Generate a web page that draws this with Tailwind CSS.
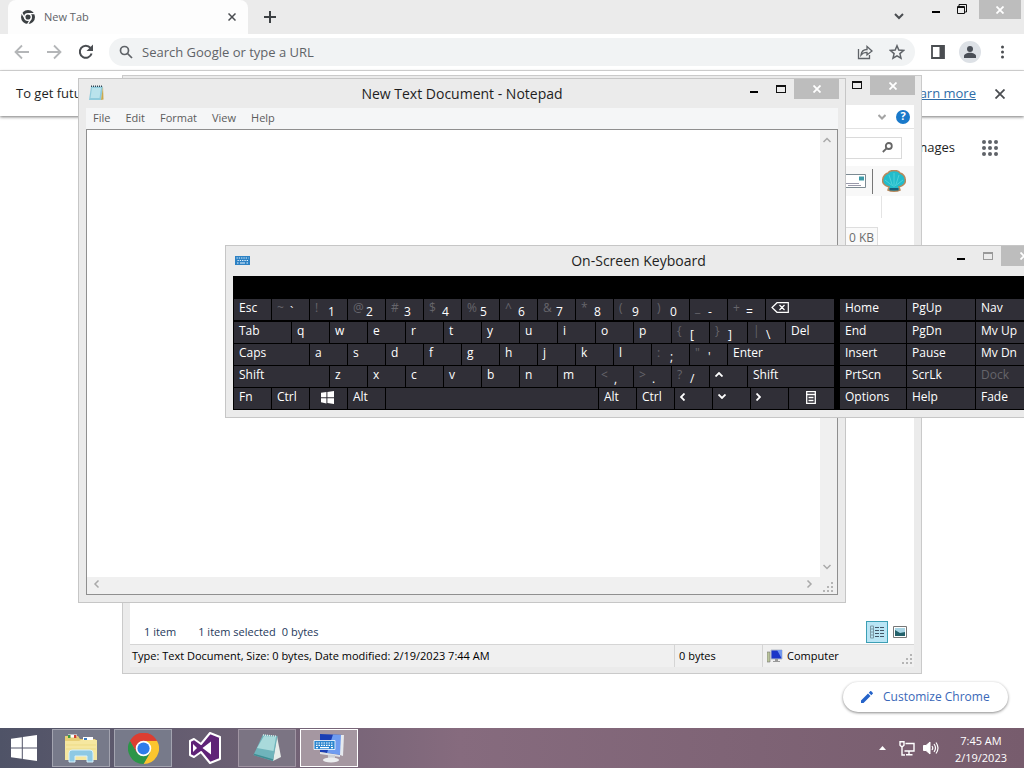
<!doctype html>
<html lang="en">
<head>
  <meta charset="utf-8">
  <meta name="viewport" content="width=device-width, initial-scale=1">
  <title>Desktop</title>
  <script src="https://cdn.jsdelivr.net/npm/@tailwindcss/browser@4"></script>
</head>

<body class="relative flex h-screen flex-col overflow-hidden bg-white font-['Open_Sans','Noto_Sans',sans-serif] text-xs text-[#1e1e1e]">

  <!-- Browser -->
  <div class="flex min-h-0 flex-1 flex-col">
    <div class="flex h-[34px] shrink-0 bg-[#ebebeb] pl-2">
      <div class="flex w-60 items-center rounded-t-lg bg-[#fdfdfd] px-3">
        <svg class="h-4 w-4" viewBox="0 0 16 16" fill="none">
          <circle cx="8" cy="8" r="7" fill="#3c4043" />
          <circle cx="8" cy="8" r="3.3" stroke="#fff" stroke-width="1.4" />
          <path d="M8 4.6H15M5.1 9.6L1.6 3.6M11 9.6L7.4 15.6" stroke="#fff" stroke-width="1.2" />
        </svg>
        <span class="ml-2 flex-1 text-[11px] text-[#5f6368]">New Tab</span>
        <button aria-label="Close tab">
          <svg class="h-2 w-2" viewBox="0 0 8 8" stroke="#4a4d51" stroke-width="1.5"><path d="M0.5 0.5l7 7M7.5 0.5l-7 7" /></svg>
        </button>
      </div>
      <button class="ml-4 self-center" aria-label="New tab">
        <svg class="h-3 w-3" viewBox="0 0 12 12" stroke="#3c4043" stroke-width="2"><path d="M6 0v12M0 6h12" /></svg>
      </button>
      <div class="ml-auto flex items-start">
        <button class="mt-3 mr-7" aria-label="Search tabs">
          <svg class="h-2 w-2.5" viewBox="0 0 10 8" fill="none" stroke="#4a4d51" stroke-width="2"><path d="M1 2l4 4 4-4" /></svg>
        </button>
        <button class="mt-[11px] mr-[17px]" aria-label="Minimize"><span class="block h-0.5 w-2 bg-black"></span></button>
        <button class="mt-1 mr-3" aria-label="Restore">
          <svg class="h-2.5 w-2.5" viewBox="0 0 10 10" fill="none" stroke="#111"><path d="M2 2V.5h7.500V8H8" /><path d="M.5 2.500h7v7h-7z" /><path d="M0 3.500h8" /></svg>
        </button>
        <button class="mr-[3px] flex h-[19px] w-[42px] items-center justify-center bg-[#bdbdbd]" aria-label="Close">
          <svg class="h-2 w-2" viewBox="0 0 8 8" stroke="#fff" stroke-width="1.8"><path d="M0.500 0.500l7 7M7.500 0.500l-7 7" /></svg>
        </button>
      </div>
    </div>

    <div class="flex h-[37px] shrink-0 items-center border-b border-[#dcdcdc] pr-[15px] pl-3.5">
      <button class="w-8" aria-label="Back">
        <svg class="h-4 w-4" viewBox="0 0 16 16" fill="none" stroke="#b4b6b8" stroke-width="1.800"><path d="M15 8H2M8 1.500L1.500 8 8 14.500" /></svg>
      </button>
      <button class="w-8" aria-label="Forward">
        <svg class="h-4 w-4" viewBox="0 0 16 16" fill="none" stroke="#b4b6b8" stroke-width="1.800"><path d="M1 8h13M8 1.500L14.500 8 8 14.500" /></svg>
      </button>
      <button aria-label="Reload">
        <svg class="h-4 w-4" viewBox="0 0 16 16" fill="none" stroke="#4a4d51" stroke-width="2"><path d="M13.600 9.500A6 6 0 1 1 12.500 4" /><path d="M15 .5v6.500H8.500z" fill="#4a4d51" stroke="none" /></svg>
      </button>
      <div class="ml-[15px] flex h-7 flex-1 items-center rounded-full bg-[#f1f3f4] px-2.5">
        <svg class="h-3.5 w-3.5" viewBox="0 0 14 14" fill="none" stroke="#5f6368" stroke-width="1.700"><circle cx="5.500" cy="5.500" r="4" /><path d="M8.500 8.500l4.500 4.500" /></svg>
        <input class="ml-[9px] min-w-0 flex-1 pt-px text-[13px] outline-none placeholder:text-[#5f6368]" type="text" aria-label="Address" placeholder="Search Google or type a URL">
        <svg class="mr-4 h-4 w-4" viewBox="0 0 16 16" fill="none" stroke="#5f6368" stroke-width="1.300"><path d="M1.500 5v9.500h11V11" /><path d="M4 11c.5-4 3-5.500 6-5.500V2.500L15 7l-5 4V8.300C7.500 8.300 5.500 9 4 11z" /></svg>
        <svg class="h-4 w-4" viewBox="0 0 16 16" fill="none" stroke="#5f6368" stroke-width="1.500"><path d="M8 1.800l1.800 4.300 4.700.4-3.600 3.100 1.100 4.600L8 11.800l-4 2.400 1.100-4.600L1.500 6.500l4.700-.4z" /></svg>
      </div>
      <svg class="ml-4 h-3.5 w-3.5" viewBox="0 0 14 14"><path d="M1 1h12v12H1z" fill="none" stroke="#4a4d51" stroke-width="1.800" /><path d="M8.500 1H13v12H8.500z" fill="#4a4d51" /></svg>
      <button class="ml-3.5" aria-label="Profile">
        <svg class="h-[22px] w-[22px]" viewBox="0 0 22 22"><circle cx="11" cy="11" r="11" fill="#dde1e6" /><circle cx="11" cy="8" r="3" fill="#4a4f57" /><path d="M5 17v-2c0-2 3-3.300 6-3.300s6 1.300 6 3.300v2z" fill="#4a4f57" /></svg>
      </button>
      <button class="ml-[15px] w-[13px]" aria-label="Menu">
        <svg class="h-3.5 w-[13px]" viewBox="0 0 13 14" fill="#4a4d51"><circle cx="6.500" cy="2" r="1.500" /><circle cx="6.500" cy="7" r="1.500" /><circle cx="6.500" cy="12" r="1.500" /></svg>
      </button>
    </div>

    <div class="relative flex h-[45px] shrink-0 items-center bg-white pr-[19px] pl-4 shadow-[0_1px_3px_#777]">
      <span class="flex-1 text-[13px]">To get future updates, you'll need Windows 10</span>
      <a class="text-[13px] text-[#2f6da8] underline" href="#">Learn more</a>
      <button class="ml-[19px]" aria-label="Dismiss">
        <svg class="h-2.5 w-2.5" viewBox="0 0 10 10" stroke="#4a4d51" stroke-width="1.800"><path d="M0.500 0.500l9 9M9.500 0.500l-9 9" /></svg>
      </button>
    </div>

    <div class="flex flex-1 flex-col items-end justify-between bg-white pb-4">
      <div class="flex items-center pt-[23px] pr-[26px]">
        <a class="text-[13px]" href="#">Images</a>
        <button class="ml-[27px]" aria-label="Google apps">
          <svg class="h-4 w-4" viewBox="0 0 16 16" fill="#5f6368"><circle cx="2" cy="2" r="2" /><circle cx="8" cy="2" r="2" /><circle cx="14" cy="2" r="2" /><circle cx="2" cy="8" r="2" /><circle cx="8" cy="8" r="2" /><circle cx="14" cy="8" r="2" /><circle cx="2" cy="14" r="2" /><circle cx="8" cy="14" r="2" /><circle cx="14" cy="14" r="2" /></svg>
        </button>
      </div>
      <button class="mr-4 flex h-[30px] w-[165px] items-center rounded-full bg-white pl-[18px] text-xs text-[#3a68b8] shadow-[0_1px_3px_#888]">
        <svg class="mr-2.5 h-3 w-3" viewBox="0 0 12 12" fill="#2563c9"><path d="M0 9.500V12h2.500l7-7L7 2.500zM7.800 1.700l2.500 2.500L11.700 2.800c.4-.4.4-.8 0-1.100L10.300.3c-.3-.4-.7-.4-1.100 0z" /></svg>
        Customize Chrome
      </button>
    </div>
  </div>

  <!-- Explorer window -->
  <section class="absolute top-[75px] left-[122px] flex h-[599px] w-[800px] flex-col border border-[#cacaca] bg-[#ebebeb] px-[7px] pb-1.5" aria-label="Explorer">
    <div class="flex h-[29px] shrink-0 items-start justify-end">
      <button class="mt-[5px] mr-2" aria-label="Maximize"><span class="block h-2 w-2.5 border border-t-2 border-[#111]"></span></button>
      <button class="-mr-[1px] flex h-[19px] w-[45px] items-center justify-center bg-[#bdbdbd]" aria-label="Close">
        <svg class="h-2 w-2" viewBox="0 0 8 8" stroke="#fff" stroke-width="1.800"><path d="M0.500 0.500l7 7M7.500 0.500l-7 7" /></svg>
      </button>
    </div>
    <div class="flex flex-1 flex-col bg-white">
      <div class="flex h-6 items-center justify-end border-b border-[#e2e2e2] pr-1">
        <svg class="mr-2.5 h-1.5 w-2" viewBox="0 0 8 6" fill="none" stroke="#a4a4a4" stroke-width="2"><path d="M.5 1L4 4.500 7.500 1" /></svg>
        <button class="flex h-3.5 w-3.5 items-center justify-center rounded-full bg-[#1979ca] text-[11px] font-bold text-white" aria-label="Help">?</button>
      </div>
      <div class="flex h-[37px] items-center justify-end pr-3">
        <label class="flex h-[22px] w-60 items-center border border-[#dadada] pr-2">
          <input class="min-w-0 flex-1 outline-none" type="text" aria-label="Search folder">
          <svg class="h-[11px] w-[11px]" viewBox="0 0 11 11" fill="none" stroke="#666" stroke-width="1.800"><circle cx="6.800" cy="4" r="3" /><path d="M4.800 6.200L.8 10" /></svg>
        </label>
      </div>
      <div class="flex h-[30px] items-center justify-end bg-[#f8f8f8] pr-2">
        <svg class="mr-1.5 h-3.5 w-8" viewBox="0 0 32 14"><path d="M.5.5h31v13H.5z" fill="#fff" stroke="#7c8a92" /><path d="M25 2.500h5v4h-5z" fill="#3d9aa8" /><path d="M12 9.500h13M14 11.500h13" stroke="#99a" /></svg>
        <span class="mr-[9px] h-[25px] w-px bg-[#777]"></span>
        <svg class="h-[22px] w-6" viewBox="0 0 24 22">
          <path d="M6 20l1-3C2 16 0 12 .8 9.500 1 6 4 3.500 6 3c1-2 4-2.500 6-2.500S17 1 18 3c3 1 5 3.500 5.200 6.500C24 12 22 16 17 17l1 3c-3 1.500-9 1.500-12 0z" fill="#22bccb" stroke="#b8895c" stroke-width="1.500" />
          <path d="M12 17V3M10.500 16L7 5M13.500 16L17 5M9.500 15L3 10M14.500 15L21 10" stroke="#58d6dc" stroke-width=".8" /><path d="M7.500 18h9v2.500h-9z" fill="#14607c" />
        </svg>
      </div>
      <div class="mr-8 h-[22px] self-end border-r border-[#e4e4e4]"></div>
      <div class="mt-[9px] mr-9 self-end border border-[#dedede] bg-[#fafafa] px-[3px] leading-5 text-[#6d6d6d]">0 KB</div>
      <div class="mt-auto flex h-6 items-center pr-[7px] pl-3.5 text-[11px] text-[#1e395b]">
        <span class="mr-[22px]">1 item</span>
        <span class="mr-1.5">1 item selected</span>
        <span class="flex-1">0 bytes</span>
        <button class="mr-[5px] flex h-[22px] w-[22px] items-center justify-center border border-[#3c9fb5] bg-[#b9e5f5]" aria-label="Details view">
          <svg class="h-3.5 w-4" viewBox="0 0 16 14" fill="none" stroke="#456"><path d="M1.500 1h3v12h-3zM1.500 4h3M1.500 7h3M1.500 10h3" stroke="#7d99a5" /><path d="M6 2.500h10M6 5.500h10M6 8.500h10M6 11.500h10" stroke-dasharray="4 1" /></svg>
        </button>
        <button aria-label="Thumbnail view">
          <svg class="h-3 w-3.5" viewBox="0 0 14 12"><path d="M.5.5h13v11H.5z" fill="#fff" stroke="#777" /><path d="M2 2h10v8H2z" fill="#a8d5e5" /><path d="M2 4l5 3 5-1v4H2z" fill="#23616a" /></svg>
        </button>
      </div>
    </div>
    <footer class="flex h-[23px] shrink-0 border-t border-[#d5d5d5] bg-[#f0f0f0] text-[11px] leading-[22px] text-black">
      <span class="flex-1 pl-0.5">Type: Text Document, Size: 0 bytes, Date modified: 2/19/2023 7:44 AM</span>
      <span class="w-[88px] border-l border-[#d5d5d5] pl-1">0 bytes</span>
      <span class="flex w-[152px] items-center border-l border-[#d5d5d5] pl-1">
        <svg class="mr-1 h-4 w-4" viewBox="0 0 16 16"><path d="M0 4h3v10H0z" fill="#b9c49a" stroke="#777" stroke-width=".6" /><path d="M4 2h11v9H4z" fill="#1b35c8" stroke="#b6bdc8" /><path d="M10 2h5v9z" fill="#7196ee" /><path d="M8 11h3v2h2v1H6v-1h2z" fill="#999" /></svg>
        Computer
        <svg class="mt-1.5 mr-0.5 ml-auto h-2.5 w-2.5" viewBox="0 0 10 10" fill="#b5b5b5"><path d="M8 0h2v2H8zM4 4h2v2H4zM8 4h2v2H8zM0 8h2v2H0zM4 8h2v2H4zM8 8h2v2H8z" /></svg>
      </span>
    </footer>
  </section>

  <!-- Notepad window -->
  <section class="absolute top-[78px] left-[78px] flex h-[525px] w-[768px] flex-col border border-[#c6c6c6] bg-[#ebebeb] px-[7px] pb-[7px]" aria-label="Notepad">
    <header class="flex h-[29px] shrink-0 items-start">
      <svg class="mt-1.5 ml-0.5 h-4 w-4" viewBox="0 0 16 16"><path d="M3 1.500h12L13 15H1z" fill="#8fcbdc" /><path d="M15 1.500l.5 13-2.500.5z" fill="#c9a94e" /><path d="M4 3h9l-1.500 10H2.500z" fill="#b9e3ec" /><path d="M3 1.200h12" stroke="#345" stroke-width="1.500" stroke-dasharray="1 1" /></svg>
      <h1 class="flex-1 pl-[70px] text-center text-sm leading-[30px]">New Text Document - Notepad</h1>
      <button class="mt-3 mr-[18px]" aria-label="Minimize"><span class="block h-0.5 w-2 bg-black"></span></button>
      <button class="mt-1.5 mr-2" aria-label="Maximize"><span class="block h-2 w-2.5 border border-t-2 border-[#111]"></span></button>
      <button class="-mr-[1px] flex h-5 w-[45px] items-center justify-center bg-[#bdbdbd]" aria-label="Close">
        <svg class="h-2 w-2" viewBox="0 0 8 8" stroke="#fff" stroke-width="1.800"><path d="M0.500 0.500l7 7M7.500 0.500l-7 7" /></svg>
      </button>
    </header>
    <nav class="flex h-[21px] shrink-0 items-center gap-[15px] bg-[#f5f6f7] pl-[7px] text-[11px] text-[#5c5c5c]">
      <button>File</button><button>Edit</button><button>Format</button><button>View</button><button>Help</button>
    </nav>
    <div class="flex min-h-0 flex-1 flex-col border border-[#8f8f8f]">
      <div class="flex min-h-0 flex-1">
        <textarea class="flex-1 resize-none bg-white outline-none" aria-label="Document text"></textarea>
        <div class="flex w-[17px] flex-col items-center justify-between bg-[#f0f0f0] py-1.5 pr-[3px]">
          <svg class="h-2 w-2" viewBox="0 0 8 8" fill="none" stroke="#a9a9a9" stroke-width="1.500"><path d="M.5 6L4 2.500 7.500 6" /></svg>
          <svg class="h-2 w-2" viewBox="0 0 8 8" fill="none" stroke="#a9a9a9" stroke-width="1.500"><path d="M.5 2L4 5.500 7.500 2" /></svg>
        </div>
      </div>
      <div class="flex h-[17px] shrink-0 items-center bg-[#f0f0f0] pr-1 pb-[3px] pl-1.5">
        <svg class="h-2 w-2" viewBox="0 0 8 8" fill="none" stroke="#a9a9a9" stroke-width="1.500"><path d="M5.500 .5L2 4l3.500 3.500" /></svg>
        <svg class="mr-2.5 ml-auto h-2 w-2" viewBox="0 0 8 8" fill="none" stroke="#a9a9a9" stroke-width="1.500"><path d="M2.500 .5L6 4 2.500 7.500" /></svg>
        <svg class="mt-1.5 h-2.5 w-2.5" viewBox="0 0 10 10" fill="#b5b5b5"><path d="M8 0h2v2H8zM4 4h2v2H4zM8 4h2v2H8zM0 8h2v2H0zM4 8h2v2H4zM8 8h2v2H8z" /></svg>
      </div>
    </div>
  </section>

  <!-- On-screen keyboard, runs past the right edge of the desktop -->
  <section class="absolute top-[245px] left-[225px] w-[828px] border border-[#c6c6c6] bg-[#ebebeb] px-[7px] pb-[7px]" aria-label="On-Screen Keyboard">
    <header class="flex h-[30px] items-start">
      <svg class="mt-2.5 ml-0.5 h-[9px] w-[15px]" viewBox="0 0 15 9"><path d="M0 0h15v9H0z" fill="#2d82c4" /><path d="M1.500 2h12M2.500 4.500h11" stroke="#e5f3ff" stroke-width="1.200" stroke-dasharray="1.300 1" /><path d="M2 7h1.500M5 7h5M11.500 7H13" stroke="#e5f3ff" stroke-width="1.200" /></svg>
      <h1 class="flex-1 pl-[70px] text-center text-sm leading-[30px]">On-Screen Keyboard</h1>
      <button class="mt-3 mr-[18px]" aria-label="Minimize"><span class="block h-0.5 w-2 bg-black"></span></button>
      <button class="mt-1.5 mr-2" aria-label="Maximize" disabled><span class="block h-2 w-2.5 border border-t-2 border-[#999]"></span></button>
      <button class="-mr-[1px] flex h-5 w-[45px] items-center justify-center bg-[#bdbdbd]" aria-label="Close">
        <svg class="h-2 w-2" viewBox="0 0 8 8" stroke="#fff" stroke-width="1.800"><path d="M0.500 0.500l7 7M7.500 0.500l-7 7" /></svg>
      </button>
    </header>
    <div id="keyboard" class="flex flex-col gap-px bg-black pt-[23px] pb-px pl-px"></div>
  </section>

  <!-- Taskbar -->
  <footer class="flex h-10 shrink-0 items-center gap-1 bg-linear-to-r from-[#4f5367] via-[#866b7e] via-45% to-[#775c6d] pr-[17px] text-white">
    <button class="flex h-10 w-12 items-center justify-center" aria-label="Start">
      <svg class="h-[26px] w-[26px]" viewBox="0 0 26 26" fill="#fff"><path d="M0 3.700L10.800 2.200v10.300H0zM11.800 2L26 0v12.500H11.800zM0 13.500h10.800v10.300L0 22.300zM11.800 13.500H26V26l-14.200-2z" /></svg>
    </button>
    <button class="flex h-[38px] w-[58px] items-center justify-center border border-[#a3a4b0] bg-[#777a8a]" aria-label="File Explorer">
      <svg class="h-[30px] w-[34px]" viewBox="0 0 34 30"><path d="M1 3h13l2 3h15l2 2v19H1z" fill="#e8cf75" /><path d="M4 1.500h9v3H4zM19 4h10v4H19z" fill="#fff" /><path d="M4 2h2.500v3H4z" fill="#3f9b3f" /><path d="M10 2h2.500v3H10z" fill="#cf4433" /><path d="M20 5h3v3h-3z" fill="#3b7cc0" /><path d="M1 8h14l2-1h16v20H1z" fill="#f6e7a0" /><path d="M2 12h30M2 16h30" stroke="#eddb85" /><path d="M5 29V20q0-3 3-3h18q3 0 3 3v9h-6v-6H11v6z" fill="#8ec9e4" stroke="#d7f0fa" /></svg>
    </button>
    <button class="flex h-[38px] w-[58px] items-center justify-center border border-[#a3a4b0] bg-[#777a8a]" aria-label="Chrome">
      <svg class="h-[31px] w-[31px]" viewBox="0 0 32 32"><path d="M16 16L2.140 8A16 16 0 0 1 29.860 8z" fill="#dc3e31" /><path d="M16 8h13.860A16 16 0 0 1 16 32l6.900-12z" fill="#fbc52f" /><path d="M9.100 20L2.140 8A16 16 0 0 0 16 32l6.900-12z" fill="#2c9548" /><path d="M2.140 8L9.100 20 16 8h13.860A16 16 0 0 0 2.140 8z" fill="#dc3e31" /><circle cx="16" cy="16" r="8" fill="#fff" /><circle cx="16" cy="16" r="6.300" fill="#2f7ceb" /></svg>
    </button>
    <button class="flex h-[38px] w-[58px] items-center justify-center" aria-label="Visual Studio">
      <svg class="h-8 w-[34px]" viewBox="0 0 34 32"><path d="M2 9l4-2 7 5L22 1l10 4v22l-10 4-9-11-7 5-4-2z" fill="#5f2377" stroke="#fff" stroke-width="2" stroke-linejoin="round" /><path d="M5 12v8l4-4zM14.500 16l8.500 6.500v-13z" fill="#fff" /></svg>
    </button>
    <button class="flex h-[38px] w-[58px] items-center justify-center border border-[#a095a3] bg-[#7b7483]" aria-label="Notepad">
      <svg class="h-[30px] w-[30px]" viewBox="0 0 30 30"><path d="M25 3l4 21-8 4z" fill="#e6ece9" /><path d="M11 1.500l14.500 1.500L21 28 1.500 22z" fill="#6fb4bb" /><path d="M12 3l12 1-2.500 14L5 15z" fill="#a9dadb" /><path d="M2 21.500L21 27" stroke="#3f8d93" stroke-width="1.500" /><path d="M11 2l14 1.300" stroke="#dfe8e8" stroke-width="1.500" stroke-dasharray="1 1" /></svg>
    </button>
    <button class="flex h-[38px] w-[58px] items-center justify-center border border-white bg-[#a597a1]" aria-label="On-Screen Keyboard">
      <svg class="h-[30px] w-8" viewBox="0 0 32 30"><path d="M7 1l23 1-2 20-21-3z" fill="#1b3fb5" /><path d="M20 1.500L30 2l-2 20-14-2z" fill="#6f9cf0" /><path d="M28 2h3l-1 21-3-1z" fill="#e6e9ee" /><path d="M7 19l20 3v2L7 21z" fill="#dfe2e7" /><path d="M15 22h7v4h-7z" fill="#cdd1d6" /><ellipse cx="18" cy="27" rx="8" ry="2.500" fill="#eceef0" /><path d="M1 7.500h21v9H1z" fill="#2b86cf" stroke="#fff" stroke-width=".8" /><path d="M3 10h17M3 12.300h17" stroke="#fff" stroke-width="1.200" stroke-dasharray="1.500 1" /><path d="M3 14.600h2M7 14.600h9M18 14.600h2" stroke="#fff" stroke-width="1.200" /></svg>
    </button>
    <div class="ml-auto flex items-center">
      <svg class="mr-[13px] h-1 w-[7px]" viewBox="0 0 7 4" fill="#fff"><path d="M3.500 0L7 4H0z" /></svg>
      <svg class="mr-2 h-[15px] w-4" viewBox="0 0 16 15" fill="none" stroke="#fff" stroke-width="1.400"><path d="M6.500 2.500H15v7.500H5.500M10 10v3.500M7 13.800h6.500M3 6v8h3M1 .8h4v3.500L3 6 1 4.300z" /></svg>
      <svg class="mr-4 h-3.5 w-4" viewBox="0 0 16 14" fill="none" stroke="#fff"><path d="M.5 4.500H3L7 1v12L3 9.500H.5z" fill="#fff" /><path d="M9 5q1.500 2 0 4M11 3q3 4 0 8M13 1.500q4 5.500 0 11" stroke-width="1.200" /></svg>
      <time class="pt-0.5 text-center text-[11px] leading-[17px]">7:45 AM<br>2/19/2023</time>
    </div>
  </footer>

  <!-- Drawn key faces -->
  <template id="face-back"><svg class="mt-[3px] h-[11px] w-[18px]" viewBox="0 0 18 11" fill="none" stroke="#fff" stroke-width="1.200"><path d="M6 .7h11.300v9.600H6L1 5.500zM8.500 3l5 5M13.500 3l-5 5" /></svg></template>
  <template id="face-win"><svg class="mt-[3px] ml-1.5 h-[13px] w-[13px]" viewBox="0 0 26 26" fill="#fff"><path d="M0 3.700L10.800 2.200v10.300H0zM12.800 2L26 0v12.500H12.800zM0 14.500h10.800v10.300L0 22.300zM12.800 14.500H26V26l-13.200-2z" /></svg></template>
  <template id="face-menu"><svg class="mt-[3px] ml-3 h-[13px] w-2.5" viewBox="0 0 10 13" fill="none" stroke="#fff" stroke-width="1.300"><path d="M.7.7h8.600v11.600H.7zM0 3.500h10M2.500 6.500h5M2.500 9.500h5" /></svg></template>
  <template id="face-up"><svg class="mt-1.5 h-[5px] w-2" viewBox="0 0 8 5" fill="none" stroke="#fff" stroke-width="1.800"><path d="M.5 4.500L4 1l3.500 3.500" /></svg></template>
  <template id="face-down"><svg class="mt-1.5 h-[5px] w-2" viewBox="0 0 8 5" fill="none" stroke="#fff" stroke-width="1.800"><path d="M.5 .5L4 4 7.500 .5" /></svg></template>
  <template id="face-left"><svg class="mt-[5px] h-2 w-[5px]" viewBox="0 0 5 8" fill="none" stroke="#fff" stroke-width="1.800"><path d="M4.500 .5L1 4l3.500 3.500" /></svg></template>
  <template id="face-right"><svg class="mt-[5px] h-2 w-[5px]" viewBox="0 0 5 8" fill="none" stroke="#fff" stroke-width="1.800"><path d="M.5 .5L4 4 .5 7.500" /></svg></template>

  <script>
    (function() {
      const UNIT = 37;

      // A key is 'label', ['label', width], or 'shifted label' pairs such as '! 1'
      const ROWS = [
        ['Esc', '~ `', '! 1', '@ 2', '# 3', '$ 4', '% 5', '^ 6', '& 7', '* 8', '( 9', ') 0', '_ -', '+ =', ['#back', 68]],
        [['Tab', 57], 'q', 'w', 'e', 'r', 't', 'y', 'u', 'i', 'o', 'p', '{ [', '} ]', '| \\', ['Del', 48]],
        [['Caps', 75], 'a', 's', 'd', 'f', 'g', 'h', 'j', 'k', 'l', ': ;', '" \'', ['Enter', 106]],
        [['Shift', 95], 'z', 'x', 'c', 'v', 'b', 'n', 'm', '< ,', '> .', '? /', '#up', ['Shift', 86]],
        ['Fn', 'Ctrl', '#win', 'Alt', ['', 212], 'Alt', 'Ctrl', '#left', '#down', '#right', ['#menu', 45]]
      ];
      const SIDE = [
        ['Home', 'PgUp', 'Nav'],
        ['End', 'PgDn', 'Mv Up'],
        ['Insert', 'Pause', 'Mv Dn'],
        ['PrtScn', 'ScrLk', 'Dock'],
        ['Options', 'Help', 'Fade']
      ];
      const SIDE_WIDTHS = [66, 68, 69];

      function createKey(label, width) {
        const key = document.createElement('button');
        key.className = 'flex h-[21px] shrink-0 items-start bg-[#302f37] pl-[5px] text-left leading-[18px] whitespace-nowrap text-white disabled:text-[#66656b]';
        key.style.width = width + 'px';
        const pair = label.split(' ');
        if (label.length > 1 && label[0] === '#' && label[1] !== ' ') {
          key.setAttribute('aria-label', label.slice(1));
          key.appendChild(document.getElementById('face-' + label.slice(1)).content.cloneNode(true));
        } else if (label.length === 3 && pair.length === 2) {
          const shifted = document.createElement('span');
          shifted.className = 'w-[13px] text-[#66656b]';
          shifted.textContent = pair[0];
          const main = document.createElement('span');
          main.className = 'mt-1';
          main.textContent = pair[1];
          key.append(shifted, main);
        } else {
          key.textContent = label;
        }
        if (label === '') key.setAttribute('aria-label', 'Space');
        key.disabled = label === 'Dock';
        return key;
      }

      const keyboard = document.getElementById('keyboard');
      ROWS.forEach((keys, i) => {
        const row = document.createElement('div');
        row.className = 'flex justify-between first:pb-px';
        const main = document.createElement('div');
        main.className = 'flex gap-px';
        keys.forEach(k => main.appendChild(Array.isArray(k) ? createKey(k[0], k[1]) : createKey(k, UNIT)));
        const side = document.createElement('div');
        side.className = 'flex gap-px';
        SIDE[i].forEach((k, n) => side.appendChild(createKey(k, SIDE_WIDTHS[n])));
        row.append(main, side);
        keyboard.appendChild(row);
      });
    })();
  </script>
</body>
</html>
